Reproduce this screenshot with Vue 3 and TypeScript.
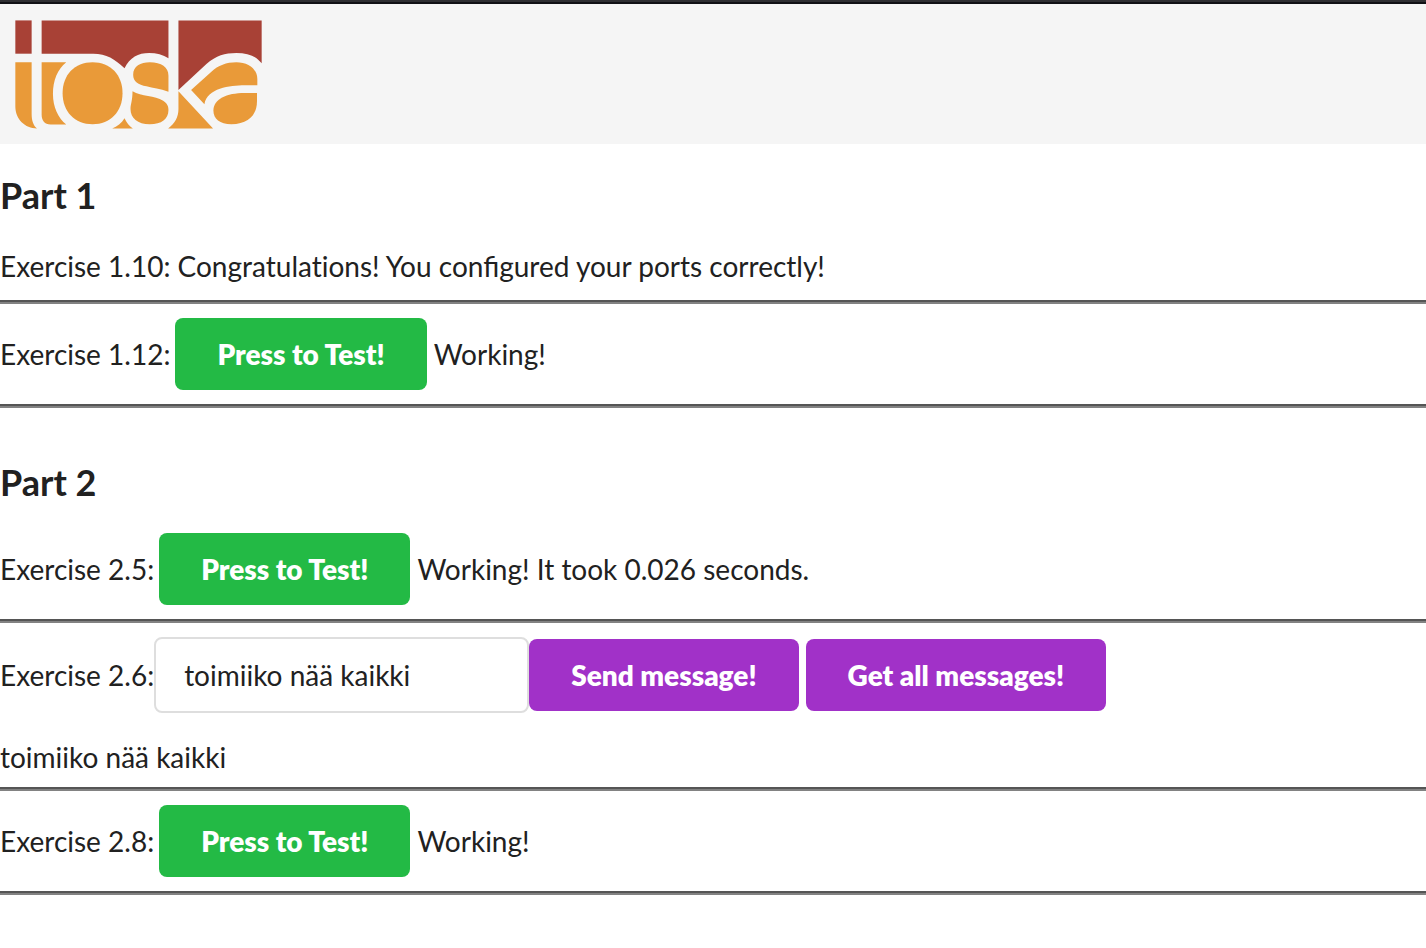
<script setup lang="ts">
import { ref } from 'vue'

const message = ref('toimiiko nää kaikki')
const messages = ref<string[]>(['toimiiko nää kaikki'])
const statuses = ref<Record<string, string>>({
  '1.12': 'Working!',
  '2.5': 'Working! It took 0.026 seconds.',
  '2.8': 'Working!',
})

function runTest(id: string) {
  statuses.value[id] = id === '2.5' ? 'Working! It took 0.026 seconds.' : 'Working!'
}

function sendMessage() {
  if (message.value) messages.value.push(message.value)
}

function getMessages() {
  messages.value = [...messages.value]
}
</script>

<template>
  <div class="page">
    <header class="banner">
      <svg class="logo" viewBox="45 58 742 327" role="img" aria-label="toska">
        <g fill="#a84136">
          <path d="M46 59H95V159H46Z" />
          <path d="M125 59H506V173C490 162 470 157 448 157C415 157 390 170 374 203C345 175 320 159 280 159H125Z" />
          <path d="M536 59H786V188C770 166 745 157 710 157C675 157 650 165 620 190L536 268Z" />
        </g>
        <g fill="#e99a39">
          <path d="M46 185H95V340C95 360 100 374 111 384C75 384 46 356 46 318Z" />
          <path d="M125 185H199C173 205 159 240 159 280C159 320 175 352 199 372H152C134 372 125 360 125 342Z" />
          <path d="M278 185C332 185 368 223 368 278C368 333 332 371 278 371C224 371 188 333 188 278C188 223 224 185 278 185Z" />
          <path d="M337 384C352 378 365 368 374 353C381 368 388 376 399 384Z" />
          <path d="M400 223C400 197 422 185 450 185C485 185 506 200 506 225V273C480 265 460 262 440 257C415 252 400 243 400 223Z" />
          <path d="M398 272C425 288 465 285 490 300C502 308 506 316 506 328C506 355 485 371 450 371C413 371 392 352 392 325C392 312 398 300 398 272Z" />
          <path d="M536 272L640 384H505C525 368 536 350 536 325Z" />
          <path d="M574 268L635 213C655 195 680 185 710 185C745 185 773 205 773 235V254H735C690 255 622 262 614 311Z" />
          <path d="M772 277V300C772 345 745 371 695 371C660 371 641 355 641 330C641 295 680 277 735 277Z" />
        </g>
      </svg>
    </header>

    <main>
      <section>
        <h3>Part 1</h3>
        <p>Exercise 1.10: Congratulations! You <span class="ligated">configured</span> your ports correctly!</p>
        <hr />
        <div class="line">
          <span class="name">Exercise 1.12:</span>
          <button class="green" type="button" @click="runTest('1.12')">Press to Test!</button>
          <span>{{ statuses['1.12'] }}</span>
        </div>
        <hr />
      </section>

      <section>
        <h3>Part 2</h3>
        <div class="line">
          <span class="name">Exercise 2.5:</span>
          <button class="green" type="button" @click="runTest('2.5')">Press to Test!</button>
          <span>{{ statuses['2.5'] }}</span>
        </div>
        <hr />
        <form class="line" @submit.prevent="sendMessage">
          <label for="message">Exercise 2.6:</label>
          <input id="message" v-model="message" type="text" autocomplete="off" />
          <button class="purple" type="submit">Send message!</button>
          <button class="purple" type="button" @click="getMessages">Get all messages!</button>
        </form>
        <div class="messages">
          <p v-for="(text, i) in messages" :key="i">{{ text }}</p>
        </div>
        <hr />
        <div class="line">
          <span class="name">Exercise 2.8:</span>
          <button class="green" type="button" @click="runTest('2.8')">Press to Test!</button>
          <span>{{ statuses['2.8'] }}</span>
        </div>
        <hr />
      </section>
    </main>
  </div>
</template>

<style>
body {
  margin: 0;
  background: #fff;
}
</style>

<style scoped>
.page {
  font-family: Lato, "Liberation Sans", sans-serif;
  font-size: 28px;
  font-variant-ligatures: none;
  line-height: 40px;
  color: #212121;
}

.ligated {
  font-variant-ligatures: normal;
}

.banner {
  background: #f5f5f5;
}

.banner::before {
  content: "";
  display: block;
  height: 2px;
  border-bottom: 2px solid #111115;
  background: #2f2f32;
}

.logo {
  display: block;
  width: 247px;
  height: 109px;
  padding: 16px 15px 15px;
}

section {
  padding-top: 28px;
}

section + section {
  padding-top: 37px;
}

h3 {
  margin: 0 0 28px;
  font-size: 36px;
  font-weight: 700;
  line-height: 46px;
}

p {
  margin: 0;
}

.line {
  display: flex;
  align-items: center;
}

.name {
  margin-right: 5px;
}

hr {
  height: 2px;
  margin: 14px 0;
  border: 0;
  border-top: 2px solid #555;
  background: #828282;
}

button {
  margin: 0 7px 0 0;
  padding: 16px 42px;
  border: 0;
  border-radius: 8px;
  color: #fff;
  font: inherit;
  font-weight: 800;
  cursor: pointer;
}

.green {
  background: #23ba45;
}

.purple {
  background: #a131c8;
}

input {
  box-sizing: border-box;
  width: 375px;
  height: 76px;
  padding: 0 28px;
  border: 2px solid #dedede;
  border-radius: 8px;
  background: #fff;
  color: inherit;
  font: inherit;
}

.messages {
  padding-top: 28px;
  line-height: 32px;
}
</style>
